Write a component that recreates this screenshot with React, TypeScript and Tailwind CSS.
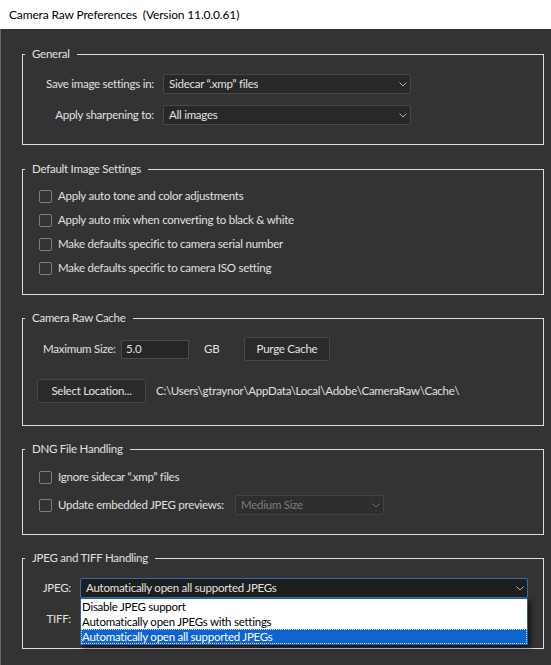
import type { ReactNode } from "react";

function Chevron({ className = "" }: { className?: string }) {
  return (
    <svg width="8" height="5" viewBox="0 0 8 5" className={className} fill="none">
      <path d="M0.5 0.5 L4 4 L7.5 0.5" stroke="currentColor" strokeWidth="1" />
    </svg>
  );
}

function Select({
  value,
  className = "",
  disabled = false,
  focused = false,
  children,
}: {
  value: string;
  className?: string;
  disabled?: boolean;
  focused?: boolean;
  children?: ReactNode;
}) {
  const tone = focused
    ? "border-[#2f6cb8] bg-[#1e1e1e] text-[#e2e2e2]"
    : disabled
      ? "border-[#434343] bg-[#2e2e2e] text-[#7c7c7c]"
      : "border-[#484848] bg-[#282828] text-[#e2e2e2]";
  return (
    <div className={`relative flex h-[20px] items-center justify-between rounded-[2px] border pl-[5px] pr-[3px] ${tone} ${className}`}>
      <span className="truncate whitespace-nowrap">{value}</span>
      <Chevron className={disabled ? "text-[#6f6f6f]" : "text-[#b5b5b5]"} />
      {children}
    </div>
  );
}

function Checkbox({ label, className = "" }: { label: string; className?: string }) {
  return (
    <label className={`flex items-center ${className}`}>
      <span className="h-[13px] w-[13px] shrink-0 rounded-[2px] border border-[#7e7e7e]" />
      <span className="ml-[6px] whitespace-pre">{label}</span>
    </label>
  );
}

function Group({ title, className = "", children }: { title: string; className?: string; children: ReactNode }) {
  return (
    <fieldset className="mt-[15px] border border-[#dcdcdc] first:mt-[17px]">
      <legend className="ml-[2px] whitespace-nowrap px-[7px] leading-[16px] text-[#e0e0e0]">{title}</legend>
      <div className={className}>{children}</div>
    </fieldset>
  );
}

function Button({ label, className = "" }: { label: string; className?: string }) {
  return (
    <button className={`flex h-[24px] shrink-0 items-center justify-center whitespace-nowrap rounded-[2px] border border-[#474747] bg-[#2a2a2a] text-[#e2e2e2] ${className}`}>
      {label}
    </button>
  );
}

const jpegOptions = [
  "Disable JPEG support",
  "Automatically open JPEGs with settings",
  "Automatically open all supported JPEGs",
];

export default function App() {
  return (
    <div className="flex h-[665px] w-[551px] flex-col overflow-hidden bg-[#333333] font-['Lato',sans-serif] text-[11.5px] tracking-[-0.25px] text-[#e0e0e0]">
      <div className="flex h-[29px] shrink-0 items-center whitespace-pre bg-white pl-[9px] text-[12px] tracking-[-0.15px] text-black">
        Camera Raw Preferences  (Version 11.0.0.61)
      </div>

      <div className="flex-1 border-l border-[#666666] pl-[21px] pr-[7px]">
        <Group title="General" className="pb-[19px] pt-[12px]">
          <div className="flex h-[20px] items-center">
            <span className="w-[131px] whitespace-nowrap text-right">Save image settings in:</span>
            <Select value="Sidecar “.xmp” files" className="ml-[9px] w-[248px]" />
          </div>
          <div className="mt-[11px] flex h-[20px] items-center">
            <span className="w-[131px] whitespace-nowrap text-right">Apply sharpening to:</span>
            <Select value="All images" className="ml-[9px] w-[248px]" />
          </div>
        </Group>

        <div className="h-px" />

        <Group title="Default Image Settings" className="pb-[14px] pl-[16px] pt-[7px]">
          <Checkbox label="Apply auto tone and color adjustments" className="h-[24px]" />
          <Checkbox label="Apply auto mix when converting to black & white" className="h-[24px]" />
          <Checkbox label="Make defaults specific to camera serial number" className="h-[24px]" />
          <Checkbox label="Make defaults specific to camera ISO setting" className="h-[24px]" />
        </Group>

        <Group title="Camera Raw Cache" className="pb-[22px] pt-[11px]">
          <div className="flex h-[24px] items-center pl-[20px]">
            <span className="w-[78px] shrink-0 whitespace-nowrap">Maximum Size:</span>
            <div className="flex h-[19px] w-[68px] shrink-0 items-center border border-[#4b4b4b] bg-[#262626] pl-[4px]">5.0</div>
            <span className="ml-[15px] w-[40px] shrink-0">GB</span>
            <Button label="Purge Cache" className="w-[86px]" />
          </div>
          <div className="mt-[18px] flex h-[24px] items-center pl-[14px]">
            <Button label="Select Location..." className="w-[109px]" />
            <span className="ml-[10px] whitespace-nowrap">C:\Users\gtraynor\AppData\Local\Adobe\CameraRaw\Cache\</span>
          </div>
        </Group>

        <Group title="DNG File Handling" className="pb-[19px] pl-[16px] pt-[10px]">
          <Checkbox label="Ignore sidecar “.xmp” files" className="h-[20px]" />
          <div className="mt-[8px] flex h-[20px] items-center">
            <Checkbox label="Update embedded JPEG previews:" className="w-[196px] shrink-0" />
            <Select value="Medium Size" disabled className="w-[149px]" />
          </div>
        </Group>

        <Group title="JPEG and TIFF Handling" className="pb-[19px] pt-[12px]">
          <div className="relative z-10 flex h-[20px] items-center">
            <span className="w-[48px] text-right">JPEG:</span>
            <Select value="Automatically open all supported JPEGs" focused className="ml-[9px] w-[448px]">
              <div className="absolute left-[-1px] top-[19px] w-[448px] border border-[#2d5c99] bg-white text-black shadow-[3px_3px_4px_rgba(0,0,0,0.55)]">
                {jpegOptions.map((opt, i) =>
                  i === 2 ? (
                    <div key={opt} className="flex h-[15px] items-center whitespace-nowrap border border-dotted border-[#c9dcf5] bg-[#1064d0] text-white">
                      {opt}
                    </div>
                  ) : (
                    <div key={opt} className="flex h-[15px] items-center whitespace-nowrap pl-[1px]">
                      {opt}
                    </div>
                  )
                )}
              </div>
            </Select>
          </div>
          <div className="mt-[11px] flex h-[20px] items-center">
            <span className="w-[48px] text-right">TIFF:</span>
            <Select value="Automatically open all supported TIFFs" className="ml-[9px] w-[448px]" />
          </div>
        </Group>
      </div>
    </div>
  );
}
